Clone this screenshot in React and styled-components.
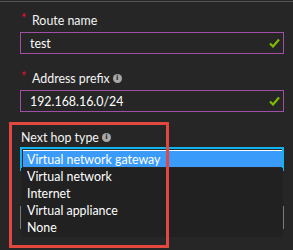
import React from "react";
import styled, { createGlobalStyle } from "styled-components";

const GlobalStyle = createGlobalStyle`
  html, body { margin: 0; padding: 0; background: #262626; }
  body { font-family: Lato, "Noto Sans", sans-serif; color: #fff; }
`;

const Page = styled.div`
  position: relative;
  width: 293px;
  height: 250px;
  overflow: hidden;
  background: #262626;
`;

const TopRule = styled.div`
  margin-top: 1px;
  height: 1px;
  background: #555;
`;

const Form = styled.div`
  padding: 0 9px 0 20px;
  display: flex;
  flex-direction: column;
`;

const Field = styled.div`
  display: flex;
  flex-direction: column;
  margin-top: ${(p) => p.$top}px;
`;

const Label = styled.div`
  display: flex;
  align-items: center;
  height: 18px;
  margin-bottom: ${(p) => p.$gap}px;
  padding-left: ${(p) => (p.$required ? 0 : 1)}px;
  font-size: 12.4px;
  color: #f4f4f4;
`;

const Star = styled.span`
  width: 12px;
  padding-left: 1px;
  box-sizing: border-box;
  color: #e4102a;
  font-size: 13px;
  align-self: flex-start;
  line-height: 14px;
`;

const Info = styled.span`
  display: inline-flex;
  align-items: center;
  justify-content: center;
  width: 9px;
  height: 9px;
  margin-left: 3px;
  border-radius: 50%;
  background: #a8a8a8;
  color: #262626;
  font-size: 7px;
  font-weight: 700;
  line-height: 1;
  font-family: "DejaVu Sans", sans-serif;
`;

const TextInput = styled.div`
  box-sizing: border-box;
  height: ${(p) => p.$h || 22}px;
  border: 1px solid ${(p) => p.$border || "#a04ea6"};
  display: flex;
  align-items: center;
  justify-content: space-between;
  padding: 0 3px 0 9px;
  font-size: 12.4px;
  color: #fff;
`;

const Select = styled.div`
  box-sizing: border-box;
  height: 24px;
  border: 2px solid #10b4ef;
  border-bottom: none;
  padding: 1px 0 0 1px;
`;

const Option = styled.div`
  box-sizing: border-box;
  height: 17px;
  display: flex;
  align-items: center;
  padding-left: ${(p) => p.$pad}px;
  font-size: 12.4px;
  color: #fff;
  background: ${(p) => (p.$selected ? "#3a9bfa" : "transparent")};
  border-top: ${(p) => (p.$selected ? "1px solid #fff" : "none")};
`;

const ListBox = styled.div`
  position: absolute;
  left: 21px;
  top: 168px;
  width: 262px;
  padding-bottom: 1px;
  background: #212121;
`;

const Highlight = styled.div`
  position: absolute;
  left: 9px;
  top: 122px;
  width: 160px;
  height: 126px;
  box-sizing: border-box;
  border: 3px solid #e2483f;
  pointer-events: none;
`;

const Check = () => (
  <svg width="11" height="10" viewBox="0 0 11 10">
    <path d="M1 5.5 L4 8.5 L10 1.5" fill="none" stroke="#7fba00" strokeWidth="2.2" />
  </svg>
);

export default function App() {
  return (
    <Page>
      <GlobalStyle />
      <TopRule />
      <Form>
        <Field $top={9}>
          <Label $required $gap={3}>
            <Star>*</Star>Route name
          </Label>
          <TextInput>
            test
            <Check />
          </TextInput>
        </Field>
        <Field $top={15}>
          <Label $required $gap={3}>
            <Star>*</Star>Address prefix<Info>i</Info>
          </Label>
          <TextInput>
            192.168.16.0/24
            <Check />
          </TextInput>
        </Field>
        <Field $top={16}>
          <Label $gap={1}>
            Next hop type<Info>i</Info>
          </Label>
          <Select>
            <Option $selected $pad={4}>Virtual network gateway</Option>
          </Select>
        </Field>
        <Field $top={35}>
          <TextInput $border="#7a7a7a" $h={23} />
        </Field>
      </Form>
      <ListBox>
        <Option $pad={6}>Virtual network</Option>
        <Option $pad={6}>Internet</Option>
        <Option $pad={6}>Virtual appliance</Option>
        <Option $pad={6}>None</Option>
      </ListBox>
      <Highlight />
    </Page>
  );
}
